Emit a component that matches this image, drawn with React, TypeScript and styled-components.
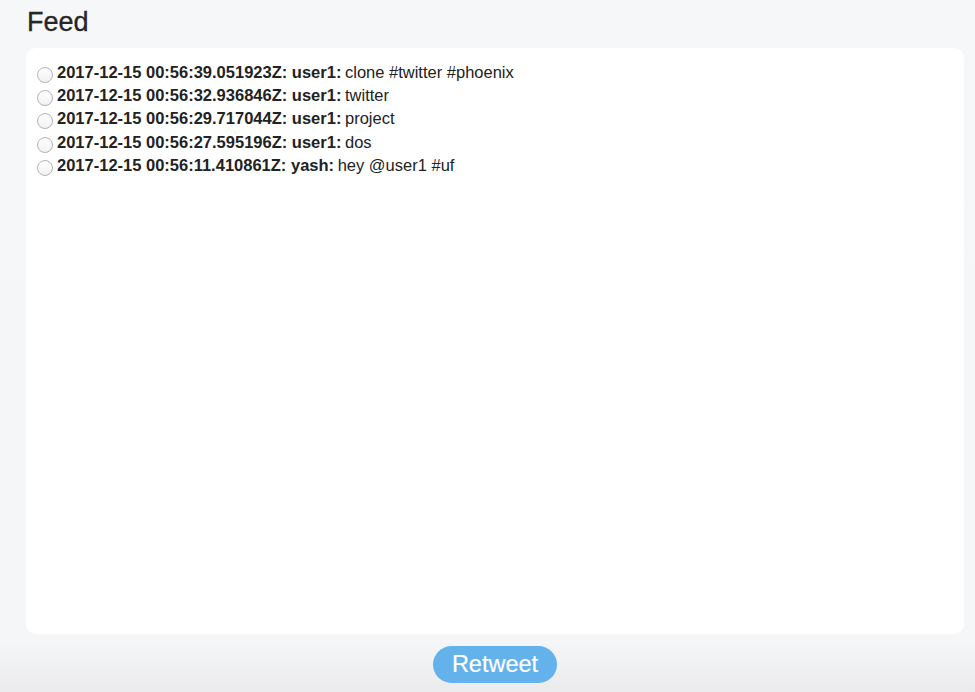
import React from "react";
import styled, { createGlobalStyle } from "styled-components";

const Global = createGlobalStyle`
  html, body {
    margin: 0;
    padding: 0;
  }
  body {
    min-height: 100vh;
    font-family: "Liberation Sans", Arial, Helvetica, sans-serif;
    color: #222;
    background: linear-gradient(to bottom, #f6f7f9 0px, #f5f6f8 640px, #ebebed 692px);
  }
`;

const Page = styled.div`
  display: flex;
  flex-direction: column;
  padding: 7px 11px 0 26px;
`;

const Title = styled.h1`
  margin: 0 0 10px 1px;
  font-size: 27px;
  line-height: 31px;
  font-weight: 400;
  color: #262626;
  -webkit-text-stroke: 0.3px #262626;
`;

const Panel = styled.div`
  height: 586px;
  box-sizing: border-box;
  background: #ffffff;
  border-radius: 10px;
  padding: 12.5px 11px;
  display: flex;
  flex-direction: column;
`;

const Row = styled.label`
  display: flex;
  align-items: flex-start;
  gap: 4px;
  font-size: 16.5px;
  line-height: 23.4px;
  color: #222;
  white-space: nowrap;
`;

const Radio = styled.input.attrs({ type: "radio" })`
  appearance: none;
  -webkit-appearance: none;
  margin: 6px 0 0 0;
  width: 16px;
  height: 16px;
  flex: none;
  border-radius: 50%;
  border: 1px solid #b3b3b3;
  background: linear-gradient(to bottom, #ffffff, #f1f1f1);
  box-sizing: border-box;
`;

const Meta = styled.strong`
  font-weight: 700;
  margin-right: -1px;
`;

const Footer = styled.div`
  display: flex;
  justify-content: center;
  padding-top: 12px;
`;

const Button = styled.button`
  width: 124px;
  height: 37px;
  border: none;
  border-radius: 19px;
  background: #63b2ec;
  color: #ffffff;
  font-family: "Liberation Sans", Arial, Helvetica, sans-serif;
  font-size: 23.5px;
  -webkit-text-stroke: 0.2px #ffffff;
  padding: 0 0 1px;
  cursor: pointer;
`;

const tweets = [
  { ts: "2017-12-15 00:56:39.051923Z", user: "user1", text: "clone #twitter #phoenix" },
  { ts: "2017-12-15 00:56:32.936846Z", user: "user1", text: "twitter" },
  { ts: "2017-12-15 00:56:29.717044Z", user: "user1", text: "project" },
  { ts: "2017-12-15 00:56:27.595196Z", user: "user1", text: "dos" },
  { ts: "2017-12-15 00:56:11.410861Z", user: "yash", text: "hey @user1 #uf" },
];

export default function App() {
  return (
    <>
      <Global />
      <Page>
        <Title>Feed</Title>
        <Panel>
          {tweets.map((t) => (
            <Row key={t.ts}>
              <Radio name="tweet" />
              <span>
                <Meta>
                  {t.ts}: {t.user}:
                </Meta>{" "}
                {t.text}
              </span>
            </Row>
          ))}
        </Panel>
        <Footer>
          <Button>Retweet</Button>
        </Footer>
      </Page>
    </>
  );
}
